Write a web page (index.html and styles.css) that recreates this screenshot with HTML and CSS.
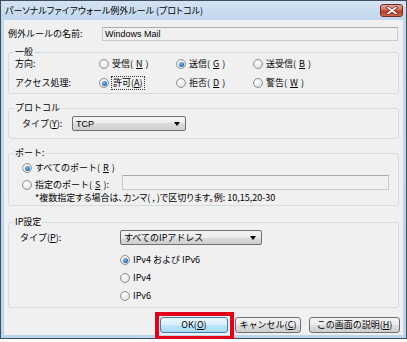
FILE: index.html
```html
<!DOCTYPE html>
<html lang="ja">
<head>
    <meta charset="UTF-8">
    <meta name="viewport" content="width=device-width, initial-scale=1.0">
    <title>パーソナルファイアウォール例外ルール (プロトコル)</title>
    <link rel="stylesheet" href="styles.css">
</head>
<body>
    <div id="dialog">
        <div class="titlebar">
            <span class="title">パーソナルファイアウォール例外ルール (プロトコル)</span>
            <span class="close-btn">
                <svg width="12" height="9" viewBox="0 0 12 9">
                    <path d="M2 1.5 L10 7.5 M10 1.5 L2 7.5" stroke="#5a1c14" stroke-width="3.2" stroke-linecap="round"/>
                    <path d="M2 1.5 L10 7.5 M10 1.5 L2 7.5" stroke="#fff" stroke-width="1.7" stroke-linecap="round"/>
                </svg>
            </span>
        </div>

        <div class="content">
            <div class="name-row">
                <span>例外ルールの名前:</span>
                <span class="textbox latin">Windows Mail</span>
            </div>

            <fieldset class="group group-general">
                <legend>一般</legend>
                <div class="choice-row">
                    <span>方向:</span>
                    <span class="radio"><i class="dot"></i>受信(<u>N</u>)</span>
                    <span class="radio"><i class="dot on"></i>送信(<u>G</u>)</span>
                    <span class="radio"><i class="dot"></i>送受信(<u>B</u>)</span>
                </div>
                <div class="choice-row">
                    <span>アクセス処理:</span>
                    <span class="radio"><i class="dot on"></i><span class="focus">許可(<u>A</u>)</span></span>
                    <span class="radio"><i class="dot"></i>拒否(<u>D</u>)</span>
                    <span class="radio"><i class="dot"></i>警告(<u>W</u>)</span>
                </div>
            </fieldset>

            <fieldset class="group group-protocol">
                <legend>プロトコル</legend>
                <div class="field-row">
                    <span>タイプ(<u>Y</u>):</span>
                    <div class="combo"><span class="latin">TCP</span><i class="arrow"></i></div>
                </div>
            </fieldset>

            <fieldset class="group group-port">
                <legend>ポート:</legend>
                <div class="port-row">
                    <span class="radio"><i class="dot on"></i>すべてのポート(<u>R</u>)</span>
                </div>
                <div class="port-row port-custom">
                    <span class="radio"><i class="dot"></i>指定のポート(<u>S</u>):</span>
                    <span class="textbox disabled"></span>
                </div>
                <div class="note">*複数指定する場合は、カンマ( , )で区切ります。例: 10,15,20-30</div>
            </fieldset>

            <fieldset class="group group-ip">
                <legend>IP設定</legend>
                <div class="field-row ip-type">
                    <span>タイプ(<u>P</u>):</span>
                    <div class="combo"><span>すべてのIPアドレス</span><i class="arrow"></i></div>
                </div>
                <div class="ip-options">
                    <span class="radio"><i class="dot on"></i>IPv4 および IPv6</span>
                    <span class="radio"><i class="dot"></i>IPv4</span>
                    <span class="radio"><i class="dot"></i>IPv6</span>
                </div>
            </fieldset>

            <div class="buttons">
                <span class="btn btn-default btn-ok">OK(<u>O</u>)</span>
                <span class="btn btn-cancel">キャンセル(<u>C</u>)</span>
                <span class="btn btn-help">この画面の説明(<u>H</u>)</span>
            </div>
        </div>

        <div class="highlight"></div>
    </div>
</body>
</html>
```

FILE: styles.css
```css
* {
    margin: 0;
    padding: 0;
    box-sizing: border-box;
}

body {
    background-color: #fff;
    font-family: "Noto Sans CJK JP", "Liberation Sans", sans-serif;
    font-size: 9px;
    line-height: 14px;
    color: #000;
    text-autospace: no-autospace;
}

.latin {
    font-family: "Liberation Sans", "Noto Sans CJK JP", sans-serif;
}

u {
    text-decoration: underline;
    text-underline-offset: 1px;
}

#dialog {
    position: relative;
    width: 407px;
    height: 339px;
    border: 1px solid #3f4d5c;
    background: linear-gradient(#d3e3f3, #c1d7ed 19px, #bcd4ec);
    padding: 0 3px 3px;
    display: flex;
    flex-direction: column;
}

/* title bar */

.titlebar {
    height: 19px;
    display: flex;
    align-items: center;
    justify-content: space-between;
    padding-left: 1px;
}

.title {
    font-size: 9px;
    font-feature-settings: "palt";
}

.close-btn {
    width: 23px;
    height: 13px;
    border: 1px solid #6e2b24;
    border-radius: 3px;
    background: linear-gradient(#eaa99d, #d46a5c 45%, #b8392b 55%, #cf6a50);
    display: flex;
    align-items: center;
    justify-content: center;
}

/* client area */

.content {
    flex: 1;
    background-color: #f0f0f0;
    padding-top: 6px;
}

.name-row {
    display: grid;
    grid-template-columns: 94px 1fr;
    align-items: center;
    height: 16px;
    padding: 0 5px 0 4px;
}

.textbox {
    height: 14px;
    line-height: 12px;
    border: 1px solid #c6cacd;
    border-top-color: #a8acb0;
    padding-left: 2px;
    background-color: #f0f0f0;
}

.group {
    margin: 9px 4px 0;
    padding: 3px 6px 0;
    border: 1px solid #d3dce3;
    border-radius: 3px;
}

.group legend {
    margin-left: -1px;
    padding: 0 1px;
    line-height: 10px;
}

.group-general {
    margin-top: 5px;
    padding-top: 0;
    padding-bottom: 3px;
}

.choice-row {
    display: grid;
    grid-template-columns: 84px 77px 77px auto;
    align-items: center;
    height: 14px;
}

.choice-row + .choice-row {
    margin-top: 5px;
}

.radio {
    display: flex;
    align-items: center;
    gap: 3px;
    white-space: nowrap;
}

.dot {
    position: relative;
    flex: none;
    width: 10px;
    height: 10px;
    border: 1px solid #8d9195;
    border-radius: 50%;
    background: radial-gradient(circle at 40% 35%, #fff, #e4e4e4 70%, #d0d0d0);
}

.dot.on::after {
    content: "";
    position: absolute;
    left: 1.5px;
    top: 1.5px;
    width: 5px;
    height: 5px;
    border-radius: 50%;
    background: radial-gradient(circle at 40% 35%, #7cc0f0, #1657a8 80%);
}

.focus {
    outline: 1px dotted #333;
    padding: 0 1px;
    line-height: 12px;
}

/* protocol */

.group-protocol {
    padding-bottom: 7px;
}

.field-row {
    display: grid;
    grid-template-columns: 50px 114px;
    align-items: center;
    height: 15px;
    padding-left: 7px;
}

.combo {
    height: 15px;
    border: 1px solid #707070;
    border-radius: 2px;
    background: linear-gradient(#f4f4f4, #ebebeb 50%, #dcdcdc 50%, #cfcfcf);
    display: flex;
    align-items: center;
    justify-content: space-between;
    padding: 0 5px 0 3px;
    white-space: nowrap;
}

.arrow {
    border-left: 3px solid transparent;
    border-right: 3px solid transparent;
    border-top: 4px solid #000;
}

/* port */

.group-port {
    padding-bottom: 1px;
}

.port-row {
    height: 14px;
    padding-left: 7px;
    display: flex;
    align-items: center;
}

.port-custom {
    display: grid;
    grid-template-columns: 100px 1fr;
    align-items: start;
    height: 17px;
    margin-right: 3px;
}

.port-custom .radio {
    margin-top: 3px;
}

.textbox.disabled {
    height: 15px;
}

.note {
    padding-left: 20px;
    line-height: 12px;
    font-feature-settings: "palt";
}

/* ip */

.group-ip {
    margin-top: 11px;
    padding-bottom: 2px;
}

.ip-type {
    grid-template-columns: 100px 142px;
    padding-left: 5px;
}

.ip-options {
    margin-top: 6px;
    padding-left: 105px;
    display: flex;
    flex-direction: column;
}

.ip-options .radio {
    height: 18px;
}

/* buttons */

.buttons {
    display: flex;
    justify-content: flex-end;
    gap: 7px;
    margin-top: 9px;
    padding-right: 3px;
}

.btn {
    height: 16px;
    border: 1px solid #707070;
    border-radius: 3px;
    background: linear-gradient(#f2f2f2, #ebebeb 50%, #dddddd 50%, #cfcfcf);
    display: flex;
    align-items: center;
    justify-content: center;
    white-space: nowrap;
}

.btn-default {
    border-color: #3c7fb1;
    background: linear-gradient(#eaf6fd, #d9f0fc 50%, #bee6fd 50%, #a7d9f5);
}

.btn-ok {
    width: 68px;
}

.btn-cancel {
    width: 66px;
}

.btn-help {
    width: 91px;
    margin-left: 1px;
}

.highlight {
    position: absolute;
    left: 154px;
    top: 311px;
    width: 79px;
    height: 28px;
    border: 4px solid #e5001a;
}
```
